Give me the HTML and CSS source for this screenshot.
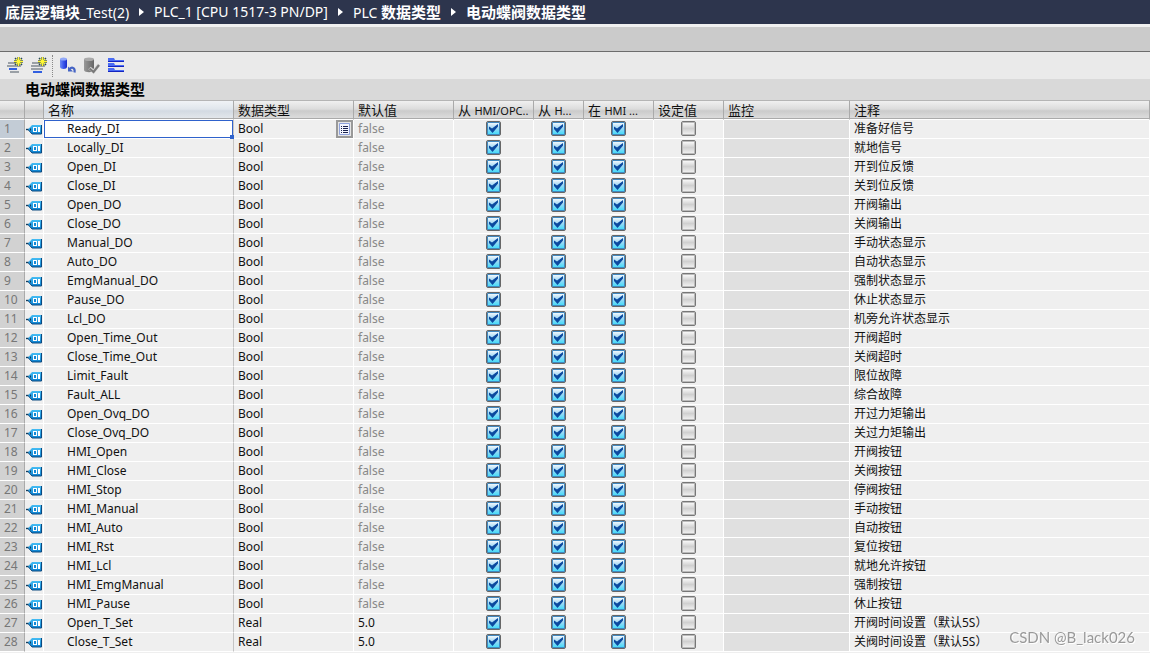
FILE: index.html
```html
<!DOCTYPE html>
<html lang="zh-CN">
<head>
<meta charset="utf-8">
<title>电动蝶阀数据类型</title>
<link rel="stylesheet" href="styles.css">
</head>
<body>
<svg class="defs" aria-hidden="true">
  <defs>
    <linearGradient id="tagFill" x1="0" y1="0" x2="0" y2="1">
      <stop offset="0" stop-color="#45bdf4"/><stop offset="1" stop-color="#0a80d0"/>
    </linearGradient>
    <linearGradient id="blueCan"><stop offset="0" stop-color="#6f8cf4"/><stop offset="0.500" stop-color="#3a56ec"/><stop offset="1" stop-color="#1a2cc8"/></linearGradient>
    <linearGradient id="greyCan"><stop offset="0" stop-color="#999"/><stop offset="1" stop-color="#666"/></linearGradient>
    <symbol id="tag" viewBox="0 0 16 11">
      <path d="M0 5.500h3" stroke="#123c5c" stroke-width="1.400"/>
      <path d="M2 5.500 6 1h9.500v9H6z" fill="url(#tagFill)"/>
      <path d="M2 5.500 6 10h9.500V1" fill="none" stroke="#0c4a80"/>
      <path d="M4 4.500h1v2H4z" fill="#123c5c"/>
      <path d="M7 3h4v5H7zM12 3h2v5h-2z" fill="#fff"/>
      <path d="M8 4h2v3H8z" fill="#1688d4"/>
    </symbol>
    <symbol id="star" viewBox="0 0 9 9">
      <path d="M4.500 0v9M0 4.500h9" stroke="#59683c" stroke-width="2.400"/>
      <path d="m1 1 7 7M8 1 1 8" stroke="#284a58" stroke-width="1.500"/>
      <path d="M4.500 0v9M0 4.500h9M2 2l5 5M7 2 2 7" stroke="#fff734" stroke-width="1.200"/>
    </symbol>
  </defs>
</svg>

<header class="titlebar">
  <nav class="crumbs" aria-label="路径">
    <a href="#"><b>底层逻辑块</b>_Test(2)</a><span class="arrow"></span>
    <a href="#">PLC_1 [CPU 1517-3 PN/DP]</a><span class="arrow"></span>
    <a href="#">PLC <b>数据类型</b></a><span class="arrow"></span>
    <a href="#"><b>电动蝶阀数据类型</b></a>
  </nav>
</header>
<div class="band"></div>

<div class="toolbar" role="toolbar" aria-label="工具栏">
  <button class="tool" type="button" aria-label="插入行">
    <svg width="17" height="17" viewBox="0 0 17 17"><path d="M1 6h8M0 9h14M3 15h9" stroke="#9aa0a6" stroke-width="2"/><path d="M2 12h8" stroke="#315fe0" stroke-width="2"/><use href="#star" x="7" y="0" width="9" height="9"/></svg>
  </button>
  <button class="tool" type="button" aria-label="添加行">
    <svg width="17" height="17" viewBox="0 0 17 17"><path d="M1 6h8M0 9h14M0 12h12" stroke="#9aa0a6" stroke-width="2"/><path d="M2 15h9" stroke="#315fe0" stroke-width="2"/><use href="#star" x="7" y="0" width="9" height="9"/></svg>
  </button>
  <span class="divider"></span>
  <button class="tool" type="button" aria-label="保持实际值">
    <svg width="17" height="17" viewBox="0 0 17 17"><path d="M0 2v8c0 2.500 7 2.500 7 0V2z" fill="url(#blueCan)"/><ellipse cx="3.500" cy="2" rx="3.500" ry="1.600" fill="#91a8f8"/><path d="M9.500 12c2-2 6-2 5 3.500" fill="none" stroke="#4564c4" stroke-width="2.200"/><path d="M8 9.500v5h5z" fill="#4564c4"/></svg>
  </button>
  <button class="tool" type="button" aria-label="快照" disabled>
    <svg width="17" height="17" viewBox="0 0 17 17"><path d="M0 2v11c0 3 10 3 10 0V2z" fill="url(#greyCan)"/><ellipse cx="5" cy="2.200" rx="5" ry="1.800" fill="#aaa"/><path d="m5.500 11 4 3.500 5.500-7" fill="none" stroke="#d8d8d8" stroke-width="3.600"/><path d="m5.500 11.500 4 3.500 5.500-7" fill="none" stroke="#7a7a7a" stroke-width="2.200"/></svg>
  </button>
  <button class="tool" type="button" aria-label="展开模式">
    <svg width="17" height="17" viewBox="0 0 17 17"><path d="M0 1h6l1 2h9v1H0zM0 6h6l1 2h9v1H0zM0 11h6l1 2h9v1H0z" fill="#4a6cf4"/><path d="M0 4.500h16M0 9.500h16M0 14.500h16" stroke="#1424c0"/></svg>
  </button>
</div>

<main>
  <h1>电动蝶阀数据类型</h1>
  <table>
    <colgroup>
      <col class="c-num"><col class="c-icon"><col class="c-name"><col class="c-type"><col class="c-default">
      <col class="c-acc"><col class="c-write"><col class="c-vis"><col class="c-set"><col class="c-mon"><col>
    </colgroup>
    <thead>
      <tr>
        <th></th><th></th><th class="active">名称</th><th>数据类型</th><th>默认值</th>
        <th>从 <small>HMI/OPC..</small></th><th>从 <small>H...</small></th><th>在 <small>HMI ...</small></th>
        <th>设定值</th><th>监控</th><th>注释</th>
      </tr>
    </thead>
    <tbody id="rows"></tbody>
  </table>
</main>
<div class="watermark">CSDN @B_lack026</div>
<script src="rows.js"></script>
</body>
</html>
```

FILE: styles.css
```css
* { box-sizing: border-box; }

body {
  margin: 0;
  height: 100vh;
  overflow: hidden;
  background: #efefef;
  color: #111;
  font: 12px/18px "Noto Sans", "Noto Sans CJK SC", sans-serif;
}

.defs { position: absolute; width: 0; height: 0; }

.titlebar {
  height: 24px;
  background: #2d354d;
}

.crumbs {
  display: flex;
  align-items: center;
  gap: 10px;
  height: 24px;
  padding-left: 5px;
  font-size: 14px;
  line-height: 24px;
  white-space: nowrap;
}

.crumbs a { color: #fff; text-decoration: none; }
.crumbs b { font-size: 15px; font-weight: 700; }

.arrow {
  border: 4px solid transparent;
  border-left: 5px solid #fff;
  border-right: 0;
}

.band {
  height: 28px;
  border-top: 3px solid #f0f0f0;
  border-bottom: 1px solid #6d6d6d;
  background: #cbcbcb;
}

.toolbar {
  display: flex;
  align-items: center;
  gap: 7px;
  height: 27px;
  padding-left: 7px;
  background: #eaeaea;
}

.tool {
  display: flex;
  padding: 0;
  border: 0;
  background: none;
}

.divider {
  height: 22px;
  margin-left: -3px;
  border-left: 1px dotted #888;
}

h1 {
  margin: 0;
  padding-left: 25px;
  height: 21px;
  background: #d9d9d9;
  color: #000;
  font-size: 15px;
  font-weight: 700;
  line-height: 21px;
}

table {
  width: 100%;
  table-layout: fixed;
  border-collapse: separate;
  border-spacing: 0;
}

.c-num { width: 25px; }
.c-icon { width: 19px; }
.c-name { width: 190px; }
.c-type { width: 120px; }
.c-default { width: 100px; }
.c-acc { width: 80px; }
.c-write { width: 50px; }
.c-vis { width: 70px; }
.c-set { width: 70px; }
.c-mon { width: 126px; }

thead th {
  height: 20px;
  padding: 0 0 0 4px;
  border-top: 1px solid #b5b5b5;
  border-right: 1px solid #aaa;
  border-bottom: 1px solid #fff;
  background: linear-gradient(#f0f0f0, #dcdcdc 45%, #cbcbcb 55%, #dedede);
  box-shadow: inset 0 -1px 0 #aaa;
  font-size: 13px;
  font-weight: 400;
  line-height: 16px;
  text-align: left;
  white-space: nowrap;
  overflow: hidden;
}

thead th.active { background: linear-gradient(#f0f3f6, #e0e6ec 45%, #d3dae2 55%, #e4e8ec); }
th small { font-size: 11px; }

td, tbody th {
  position: relative;
  height: 19px;
  padding: 0 0 0 4px;
  border: 0;
  border-right: 1px solid #fff;
  border-bottom: 1px solid #fff;
  background: #efefef;
  font-weight: 400;
  line-height: 18px;
  text-align: left;
  white-space: nowrap;
}

tbody th {
  border-right-color: #aaa;
  background: #d2d2d2;
  color: #777;
}

td.icon { padding: 0 0 0 1px; }
td.icon svg { display: block; }
td.name { padding-left: 23px; border-right-color: #c4c4c4; }
td.default { color: #888; }
td.default.set { color: #111; }
td.check { padding: 0 0 1px; }
td.monitor { background: #e0e0e0; }

tr.current th { background: #c3ccd6; }
tr.current .name { background: #fff; box-shadow: inset 0 0 0 1px #2f62cc; }

tr.current .name::after {
  content: "";
  position: absolute;
  right: -1px;
  bottom: -1px;
  width: 4px;
  height: 4px;
  background: #2f62cc;
}

.type-cell {
  display: flex;
  align-items: center;
  justify-content: space-between;
  height: 18px;
}

.picker {
  width: 17px;
  height: 18px;
  padding: 0;
  border: 2px solid #999;
  background: #e5e5e5;
}

.picker svg { display: block; }

.check input {
  appearance: none;
  display: block;
  width: 15px;
  height: 15px;
  margin: 0 auto;
  border: 1px solid #777;
  border-radius: 2px;
  background: linear-gradient(#fff, #d0d0d0 50%, #f4f4f4);
  box-shadow: inset 0 0 0 1px #bbb;
}

.check input:checked {
  border-color: #666;
  background:
    url("data:image/svg+xml,%3Csvg xmlns='http://www.w3.org/2000/svg' viewBox='0 0 13 13'%3E%3Cpath d='M2 4.500 5 6.500 11 2v2.500L5.500 11 2 7z' fill='%230b4aa0'/%3E%3C/svg%3E") center / 13px 13px no-repeat,
    linear-gradient(#fff, #a4d8f4 45%, #38dcfa);
  box-shadow: inset 0 0 0 1px #4088c0;
}

.watermark {
  position: fixed;
  right: 15px;
  bottom: 6px;
  color: #999;
  font: 15px/20px Lato, sans-serif;
  text-shadow: 1px 1px 0 #fff;
}
```

FILE: rows.js
```js
const rows = [
  ["Ready_DI", "准备好信号"],
  ["Locally_DI", "就地信号"],
  ["Open_DI", "开到位反馈"],
  ["Close_DI", "关到位反馈"],
  ["Open_DO", "开阀输出"],
  ["Close_DO", "关阀输出"],
  ["Manual_DO", "手动状态显示"],
  ["Auto_DO", "自动状态显示"],
  ["EmgManual_DO", "强制状态显示"],
  ["Pause_DO", "休止状态显示"],
  ["Lcl_DO", "机旁允许状态显示"],
  ["Open_Time_Out", "开阀超时"],
  ["Close_Time_Out", "关阀超时"],
  ["Limit_Fault", "限位故障"],
  ["Fault_ALL", "综合故障"],
  ["Open_Ovq_DO", "开过力矩输出"],
  ["Close_Ovq_DO", "关过力矩输出"],
  ["HMI_Open", "开阀按钮"],
  ["HMI_Close", "关阀按钮"],
  ["HMI_Stop", "停阀按钮"],
  ["HMI_Manual", "手动按钮"],
  ["HMI_Auto", "自动按钮"],
  ["HMI_Rst", "复位按钮"],
  ["HMI_Lcl", "就地允许按钮"],
  ["HMI_EmgManual", "强制按钮"],
  ["HMI_Pause", "休止按钮"],
  ["Open_T_Set", "开阀时间设置（默认5S）", "Real", "5.0"],
  ["Close_T_Set", "关阀时间设置（默认5S）", "Real", "5.0"]
];

const flags = [["可访问", true], ["可写", true], ["可见", true], ["设定值", false]];

const picker = `<button class="picker" type="button" aria-label="选择数据类型">
  <svg width="13" height="14" viewBox="0 0 13 14"><path d="M1.500 1.500h10v11h-10z" fill="#f4f6ff" stroke="#8fa2dc"/><path d="M3 4.500h1M3 6.500h1M3 8.500h1M3 10.500h1M5 4.500h5M5 6.500h5M5 8.500h5M5 10.500h5" stroke="#1c2450"/></svg>
</button>`;

document.getElementById("rows").innerHTML = rows.map(([name, note, type = "Bool", value], i) => `
  <tr${i === 0 ? ' class="current"' : ""}>
    <th scope="row">${i + 1}</th>
    <td class="icon"><svg width="16" height="11"><use href="#tag"/></svg></td>
    <td class="name">${name}</td>
    <td><div class="type-cell">${type}${i === 0 ? picker : ""}</div></td>
    <td class="default${value ? " set" : ""}">${value || "false"}</td>
    ${flags.map(([label, on]) => `<td class="check"><input type="checkbox" aria-label="${name} ${label}"${on ? " checked" : ""}></td>`).join("")}
    <td class="monitor"></td>
    <td>${note}</td>
  </tr>`).join("");
```
